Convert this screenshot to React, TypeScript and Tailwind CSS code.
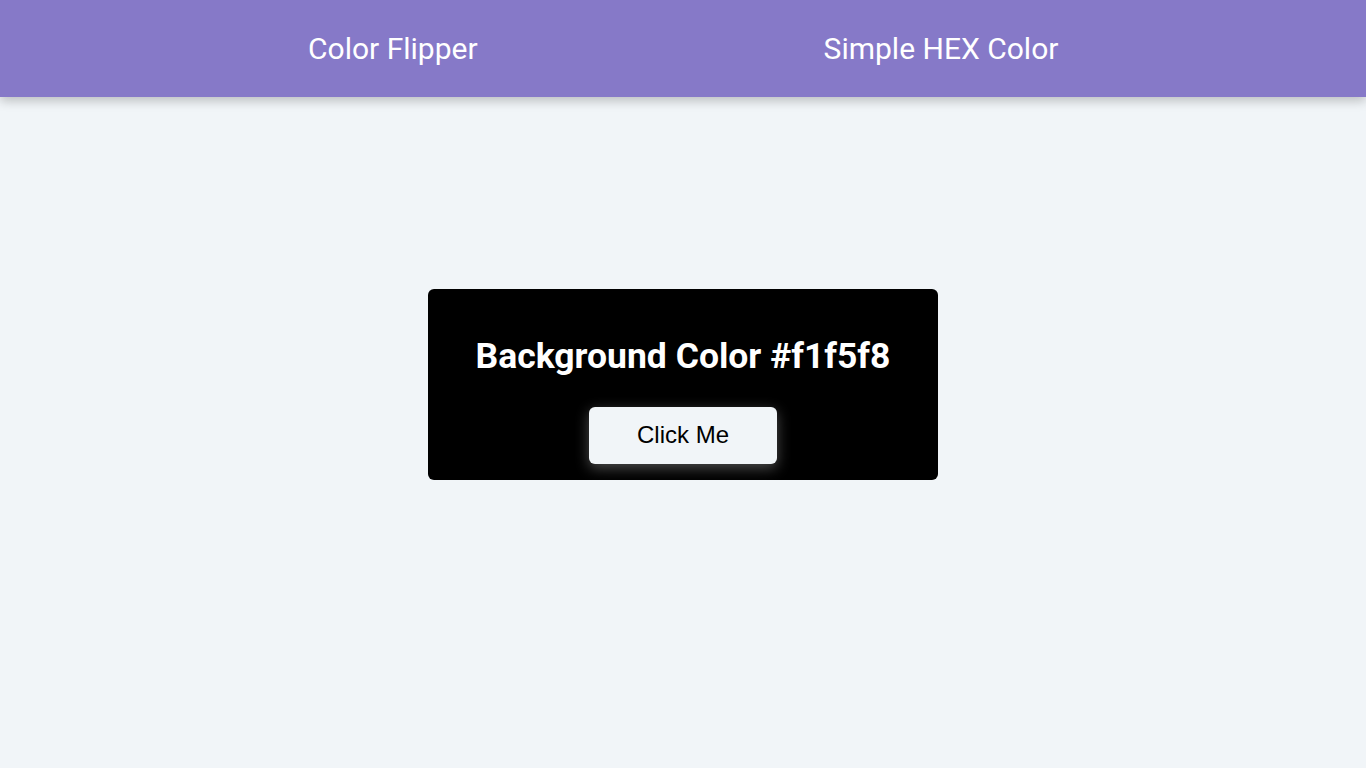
export default function App() {
  return (
    <div className="min-h-screen bg-[#f1f5f8] font-['Roboto',sans-serif]">
      <header className="relative z-10 h-[97px] bg-[#8679c8] shadow-[0_4px_10px_rgba(0,0,0,0.22)]">
        <nav className="flex h-full items-center text-[30px] text-white">
          <a className="ml-[308px]">Color Flipper</a>
          <a className="ml-[346px]">Simple HEX Color</a>
        </nav>
      </header>

      <main className="flex h-[calc(100vh-97px)] items-center justify-center pb-[97px]">
        <div className="flex w-[510px] flex-col items-center rounded-md bg-black pt-[46px] pb-[16px]">
          <h2 className="text-[35.5px] font-bold leading-[42px] text-white">
            Background Color #f1f5f8
          </h2>
          <button
            type="button"
            className="mt-[30px] h-[57px] w-[188px] rounded-md bg-[#f1f5f8] font-['Liberation_Sans',Arial,sans-serif] text-[24px] text-black shadow-[0_4px_14px_rgba(255,255,255,0.3)]"
          >
            Click Me
          </button>
        </div>
      </main>
    </div>
  );
}
